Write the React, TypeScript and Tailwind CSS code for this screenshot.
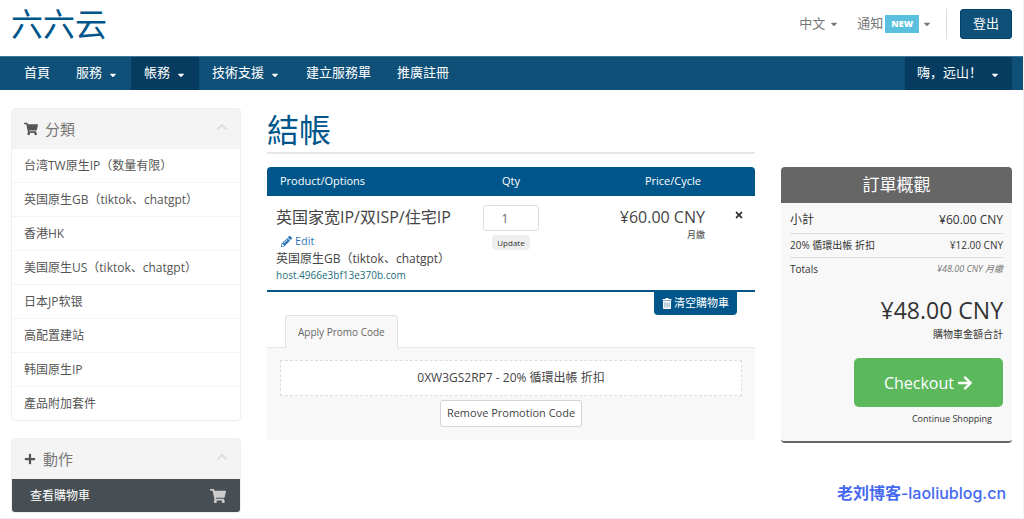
import React from "react";
import {
  FaArrowRight,
  FaCaretDown,
  FaChevronUp,
  FaPencilAlt,
  FaPlus,
  FaShoppingCart,
  FaTimes,
} from "react-icons/fa";

const categories = [
  "台湾TW原生IP（数量有限）",
  "英国原生GB（tiktok、chatgpt）",
  "香港HK",
  "美国原生US（tiktok、chatgpt）",
  "日本JP软银",
  "高配置建站",
  "韩国原生IP",
  "產品附加套件",
];

const navItems = [
  { label: "首頁", menu: false, active: false },
  { label: "服務", menu: true, active: false },
  { label: "帳務", menu: true, active: true },
  { label: "技術支援", menu: true, active: false },
  { label: "建立服務單", menu: false, active: false },
  { label: "推廣註冊", menu: false, active: false },
];

function TrashIcon() {
  return (
    <svg viewBox="0 0 10 11" className="h-[11px] w-2.5" aria-hidden="true">
      <path
        fill="currentColor"
        fillRule="evenodd"
        d="M3.5 0h3v1H9.5v1.4H.5V1h3zM1 3h8v7.2a.8.8 0 0 1-.8.8H1.800a.8.8 0 0 1-.8-.8zM2.700 4.300v5.200h.5V4.300zM4.750 4.300v5.200h.5V4.300zM6.800 4.300v5.200h.5V4.300z"
      />
    </svg>
  );
}

function TopBar() {
  return (
    <header className="flex h-14 items-start justify-between pl-[11px] pr-[11px]">
      <a href="#home" className="mt-1 text-[32px] leading-10 text-[#00568a]">
        六六云
      </a>
      <div className="mt-[9px] flex h-[30px] items-center text-[13px] text-[#777]">
        <button type="button" className="flex items-center gap-1">
          中文 <FaCaretDown className="size-2.5" />
        </button>
        <button type="button" className="ml-[18px] flex items-center">
          通知
          <span className="ml-[2px] flex h-[18px] items-center bg-[#5bc0de] px-1.5 text-[9px] font-extrabold text-white">
            NEW
          </span>
          <FaCaretDown className="ml-[3px] size-2.5" />
        </button>
        <span className="ml-3.5 h-full w-px bg-[#ddd]" />
        <button type="button" className="ml-[13px] h-[30px] rounded-[3px] border border-[#00436b] bg-[#0f5079] px-3 text-white">
          登出
        </button>
      </div>
    </header>
  );
}

function NavBar() {
  return (
    <nav className="flex h-[34px] justify-between border-t border-[#3f7797] bg-[#0f5079] pl-[11px] pr-[11px] text-[13px] text-white">
      <ul className="flex">
        {navItems.map((item) => (
          <li key={item.label} className="flex">
            <a
              href={"#" + item.label}
              className={
                item.active
                  ? "flex items-center gap-1.5 bg-[#053c5f] px-[13px] pb-0.5"
                  : "flex items-center gap-1.5 px-[13px] pb-0.5"
              }
            >
              {item.label}
              {item.menu && <FaCaretDown className="mt-1 size-2.5" />}
            </a>
          </li>
        ))}
      </ul>
      <button type="button" className="flex items-center gap-2 bg-[#053c5f] px-3 pb-0.5">
        嗨，远山！ <FaCaretDown className="mt-1 size-2.5" />
      </button>
    </nav>
  );
}

function PanelHeading({ icon, title }: { icon: React.ReactNode; title: string }) {
  return (
    <div className="flex h-10 items-center justify-between bg-[#f4f4f4] px-3">
      <h2 className="flex items-center gap-[7px] text-[15px] text-[#777]">
        <span className="text-[#555]">{icon}</span>
        {title}
      </h2>
      <button type="button" aria-label="Toggle panel" className="mb-1 text-[#ddd]">
        <FaChevronUp className="size-3" />
      </button>
    </div>
  );
}

function Sidebar() {
  return (
    <aside className="flex flex-col gap-[17px]">
      <section className="overflow-hidden rounded border border-[#eee]">
        <PanelHeading icon={<FaShoppingCart className="size-3.5" />} title="分類" />
        <ul className="text-xs text-[#555]">
          {categories.map((name) => (
            <li key={name} className="border-t border-[#f4f4f4] first:border-t-0">
              <a href={"#" + name} className="flex h-[33px] items-center px-3">
                {name}
              </a>
            </li>
          ))}
        </ul>
      </section>
      <section className="overflow-hidden rounded border border-[#eee]">
        <PanelHeading icon={<FaPlus className="size-3" />} title="動作" />
        <a href="#cart" className="flex h-[33px] items-center justify-between bg-[#474f54] pl-[18px] pr-3.5 text-xs text-white">
          查看購物車
          <FaShoppingCart className="size-4 text-[#ccc]" />
        </a>
      </section>
    </aside>
  );
}

function Cart() {
  return (
    <main>
      <h1 className="border-b-2 border-[#e7e7e7] text-[32px] leading-[44px] text-[#00568a]">結帳</h1>
      <table className="mt-[13px] w-full table-fixed border-separate border-spacing-0 text-[#444]">
        <thead className="text-[11px] text-white">
          <tr className="h-[29px]">
            <th className="w-[42%] rounded-tl bg-[#00568a] pl-[13px] text-left font-normal">Product/Options</th>
            <th className="w-[16%] bg-[#00568a] font-normal">Qty</th>
            <th className="w-[34%] bg-[#00568a] pr-[15px] text-right font-normal">Price/Cycle</th>
            <th className="w-[8%] rounded-tr bg-[#00568a]" aria-label="Remove" />
          </tr>
        </thead>
        <tbody>
          <tr className="align-top">
            <td className="border-b-2 border-[#00568a] pb-[7px] pl-[9px] pt-[9px]">
              <div className="whitespace-nowrap text-base leading-6">英国家宽IP/双ISP/住宅IP</div>
              <a href="#edit" className="flex items-center gap-[3px] pl-[5px] text-[11px] leading-6 text-[#337ab7]">
                <FaPencilAlt className="size-[11px]" /> Edit
              </a>
              <div className="whitespace-nowrap text-xs leading-3">英国原生GB（tiktok、chatgpt）</div>
              <div className="pt-0.5 text-[10px] leading-4 text-[#1a6f7c]">host.4966e3bf13e370b.com</div>
            </td>
            <td className="border-b-2 border-[#00568a] pt-[9px] text-center">
              <input
                aria-label="Quantity"
                defaultValue="1"
                className="mx-auto block h-[26px] w-14 rounded-[3px] border border-[#ddd] pr-3 text-center text-xs text-[#666]"
              />
              <button type="button" className="mx-auto mt-1 block h-[15px] rounded-sm bg-[#eee] px-[5px] text-[8px] leading-[15px] text-[#333]">
                Update
              </button>
            </td>
            <td className="border-b-2 border-[#00568a] pr-[11px] pt-[9px] text-right">
              <div className="text-base leading-6">¥60.00 CNY</div>
              <div className="text-[9px] leading-3">月繳</div>
            </td>
            <td className="border-b-2 border-[#00568a] pr-[11px] pt-3.5 text-right">
              <button type="button" aria-label="Remove item" className="ml-auto block text-[#333]">
                <FaTimes className="size-2.5" />
              </button>
            </td>
          </tr>
        </tbody>
      </table>
      <div className="flex justify-end pr-[18px]">
        <button type="button" className="flex h-[23px] items-center gap-0.5 rounded-b bg-[#00568a] px-2 text-[11px] text-white">
          <TrashIcon /> 清空購物車
        </button>
      </div>
      <div className="flex pl-[18px]">
        <button type="button" className="relative -mb-px h-[33px] rounded-t border border-b-0 border-[#e2e2e2] bg-[#f8f8f8] px-3 text-[10px] text-[#666]">
          Apply Promo Code
        </button>
      </div>
      <section className="border-t border-[#e7e7e7] bg-[#f8f8f8] px-[13px] pb-[13px] pt-3">
        <div className="flex h-9 items-center justify-center border border-dashed border-[#ddd] bg-white text-xs text-[#444]">
          0XW3GS2RP7 - 20% 循環出帳 折扣
        </div>
        <button type="button" className="mx-auto mt-1 block h-[27px] rounded-[3px] border border-[#d5d5d5] bg-white px-1.5 text-[11px] text-[#444]">
          Remove Promotion Code
        </button>
      </section>
    </main>
  );
}

function OrderSummary() {
  return (
    <aside className="mt-[59px]">
      <section className="rounded border-b-2 border-[#666] bg-[#f8f8f8] text-[#333]">
        <h2 className="flex h-9 items-center justify-center rounded-t bg-[#666] text-[17px] text-white">訂單概觀</h2>
        <div className="px-[9px]">
          <div className="flex h-[31px] items-center justify-between border-b border-[#ddd] pt-1 text-xs">
            <span>小計</span>
            <span>¥60.00 CNY</span>
          </div>
          <div className="flex h-6 items-center justify-between border-b border-[#ddd] text-[10px]">
            <span>20% 循環出帳 折扣</span>
            <span>¥12.00 CNY</span>
          </div>
          <div className="flex h-[22px] items-center justify-between text-[10px]">
            <span>Totals</span>
            <span className="text-[9px] italic text-[#777]">¥48.00 CNY 月繳</span>
          </div>
          <div className="mt-3 text-right text-[23px] leading-9">¥48.00 CNY</div>
          <div className="text-right text-[10px] leading-3">購物車金額合計</div>
          <div className="mt-[18px] flex flex-col items-end">
            <button type="button" className="flex h-[49px] items-center gap-[3px] rounded-[5px] bg-[#5cb85c] px-[30px] text-base text-white">
              Checkout <FaArrowRight className="size-4" />
            </button>
            <a href="#shop" className="mr-[11px] pb-3.5 pt-1 text-[9px] leading-4">
              Continue Shopping
            </a>
          </div>
        </div>
      </section>
      <p className="mr-1.5 mt-[38px] whitespace-nowrap text-right font-['Inter','Noto_Sans_CJK_SC',sans-serif] text-base font-medium text-[#4468f2]">
        <span className="font-bold">老刘博客</span>-laoliublog.cn
      </p>
    </aside>
  );
}

export default function App() {
  return (
    <div className="min-h-screen overflow-hidden border-r border-[#f2f2f2] bg-white font-['Open_Sans','Noto_Sans_CJK_SC',sans-serif]">
      <TopBar />
      <NavBar />
      <div className="grid grid-cols-[230fr_488fr_231fr] gap-[26px] border-b border-[#eee] pb-[5px] pl-[11px] pr-[11px] pt-[18px]">
        <Sidebar />
        <Cart />
        <OrderSummary />
      </div>
    </div>
  );
}
